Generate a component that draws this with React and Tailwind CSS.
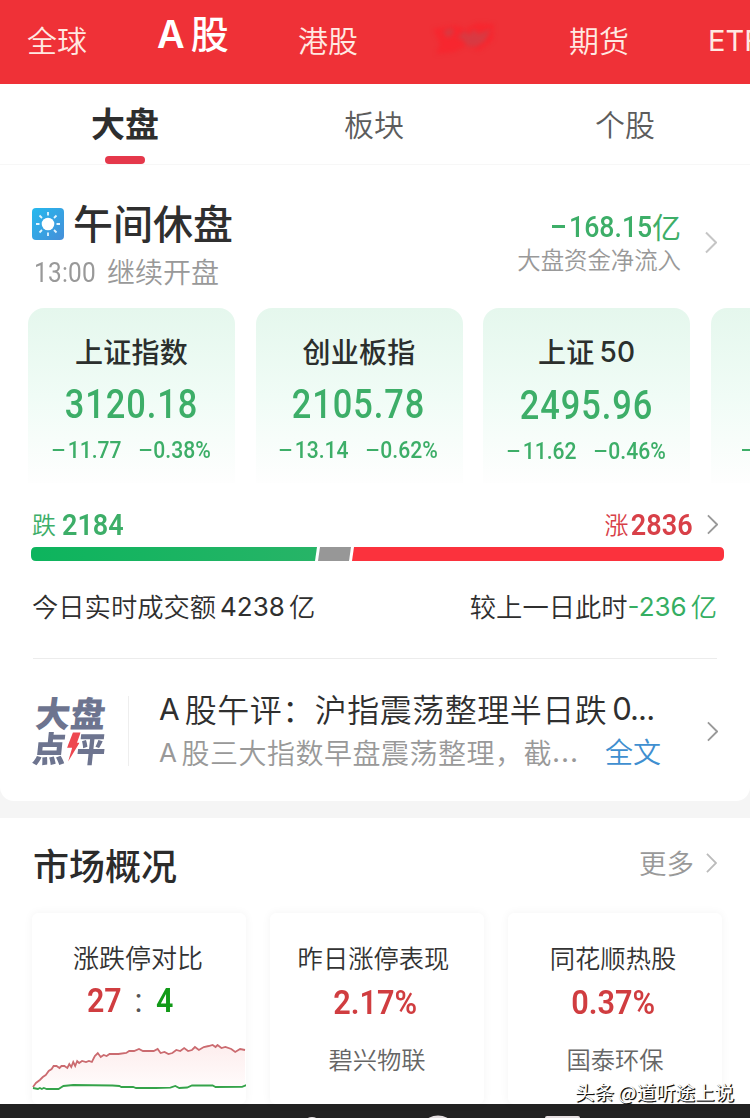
import clsx from "clsx";

const indices = [
  { name: "上证", suffix: "指数", value: "3120.18", change: "11.77", percent: "0.38%" },
  { name: "创业", suffix: "板指", value: "2105.78", change: "13.14", percent: "0.62%" },
  { name: "上证", number: "50", value: "2495.96", change: "11.62", percent: "0.46%" },
];

const riseLine =
  "1,43 4,39 8,36 11,33 14,31 17,27 20,25 22,22 25,22 28,24 30,22 33,22 36,24 38,20 40,23 42,18 44,22 46,17 48,19 51,17 55,18 58,17 61,18 64,12 67,9 70,13 73,11 76,12 79,10 88,10 96,9 99,7 104,7 109,5 113,7 124,7 128,5 131,9 135,8 139,10 143,9 147,6 151,7 155,4 159,7 163,6 166,3 170,6 175,3 180,2 184,1 187,3 189,1 193,4 197,3 203,5 207,8 212,5 217,6";

function Chevron({ className }) {
  return (
    <svg viewBox="0 0 12 22" fill="none" stroke="currentColor" strokeWidth="2" className={clsx("shrink-0", className)}>
      <path d="M1 1l10 10L1 21" />
    </svg>
  );
}

function Minus({ className }) {
  return <span className={clsx("inline-block shrink-0 bg-current", className)} />;
}

function SunIcon() {
  return (
    <svg viewBox="0 0 32 32" className="h-8 w-8 shrink-0">
      <defs>
        <linearGradient id="sky" x1="0" y1="0" x2="1" y2="1">
          <stop offset="0" stopColor="#25b9ee" />
          <stop offset="1" stopColor="#468ed8" />
        </linearGradient>
      </defs>
      <rect width="32" height="32" rx="4" fill="url(#sky)" />
      <circle cx="16" cy="16" r="6.3" fill="#fff" />
      <path
        d="M16 4v3.5M16 24.500V28M4 16h3.500M24.500 16H28M7.500 7.500l2.500 2.500M22 22l2.500 2.500M24.500 7.500L22 10M7.500 24.500L10 22"
        stroke="#e4f5ff"
        strokeWidth="1.800"
      />
    </svg>
  );
}

function TopNav() {
  return (
    <nav className="flex h-[84px] items-start overflow-hidden bg-[#ef3137] text-[30px] leading-[40px] text-[#ffe9e2]">
      <span className="ml-[27px] mt-[19px] w-[130px] shrink-0 font-[350]">全球</span>
      <span className="mt-[12px] flex w-[141px] shrink-0 gap-[6px] text-[38px] font-medium text-white">
        <span className="mt-[2px] font-['Inter'] font-semibold">A</span>
        <span>股</span>
      </span>
      <span className="mt-[19px] w-[132px] shrink-0 font-[350]">港股</span>
      <span className="mt-[21px] flex h-[36px] w-[139px] shrink-0">
        <svg viewBox="0 0 70 36" className="h-9 w-[70px] blur-[2px]">
          <path d="M3 8l22-4 10 4 12-6 17 1-1 16-14 11-13-5-12 6-18 2 4-10z" fill="#fb202a" opacity=".6" />
          <path d="M13 10l9-3 2 4-6 6zM27 17l8-8 4 5 5-6 4 5 13-5-6 12-9 6-9-1-5-7z" fill="#b94e55" opacity=".5" />
        </svg>
      </span>
      <span className="mt-[19px] w-[139px] shrink-0 font-[350]">期货</span>
      <span className="mt-[21px] shrink-0 font-['Inter'] text-[29px]">ETF</span>
    </nav>
  );
}

function Tabs() {
  return (
    <div className="grid h-[81px] grid-cols-3 border-b border-[#f7f7f7] text-center text-[30px] font-[350] leading-[40px] text-[#5c5c5c]">
      <div className="flex flex-col items-center">
        <span className="mt-[19px] text-[34px] font-bold text-[#2e2e2e]">大盘</span>
        <span className="mt-[13px] h-2 w-10 rounded-full bg-[#e5384b]" />
      </div>
      <span className="mt-[19px] pr-[2px]">板块</span>
      <span className="mt-[19px]">个股</span>
    </div>
  );
}

function Status() {
  return (
    <div className="flex h-[143px] justify-between pl-8 pr-[33px]">
      <div className="pt-[34px]">
        <div className="flex h-[50px] items-center gap-[9px]">
          <SunIcon />
          <h1 className="text-[40px] font-medium leading-[50px] text-[#2f2f2f]">
            <span className="relative -top-[2px]">午间休盘</span>
          </h1>
        </div>
        <div className="flex text-[28px] leading-[40px] text-[#999]">
          <span className="mt-px w-[75px] pl-[2px]">
            <span className="inline-block origin-left scale-x-[.87] font-['Roboto'] tracking-[0.3px]">13:00</span>
          </span>
          <span className="mt-[2px] font-[350]">继续开盘</span>
        </div>
      </div>
      <div className="flex pt-[44px]">
        <div className="mr-[24px] flex flex-col items-end">
          <div className="flex h-[34px] items-center text-[#3dae68]">
            <Minus className="mr-[4px] h-[3px] w-[13px]" />
            <span className="mt-px w-[83px] font-['Roboto'] text-[30px] font-medium leading-[34px]">
              <span className="inline-block origin-left scale-x-[.89]">168.15</span>
            </span>
            <span className="-mt-px text-[29px] leading-[34px]">亿</span>
          </div>
          <span className="text-[23.4px] font-[350] leading-[32px] text-[#999]">大盘资金净流入</span>
        </div>
        <Chevron className="mt-[22px] h-[23px] w-3 text-[#c5c5c5]" />
      </div>
    </div>
  );
}

function IndexCard({ item }) {
  return (
    <div className="flex h-[175px] w-[207px] shrink-0 flex-col items-center rounded-t-[16px] bg-linear-to-b from-[#e5f7ed] via-[#f0fcf6] via-50% to-[#fefefe] pt-[24px]">
      <div className="flex gap-[5px] text-[28px] font-medium leading-[38px] text-[#2b2f2d]">
        <span className="tracking-[0.3px]">{item.name}{item.suffix}</span>
        {item.number && <span className="mt-px font-['Inter']">{item.number}</span>}
      </div>
      <div className="mt-[11px] scale-x-[.86] font-['Roboto'] text-[40px] font-medium leading-[48px] tracking-[1.1px] text-[#3dae68]">
        {item.value}
      </div>
      <div className="mt-[9px] flex scale-x-[.88] items-center font-['Roboto'] text-[24px] leading-[24px] text-[#3dae68]">
        <Minus className="mr-[4px] h-[2px] w-[13px]" />
        <span className="font-medium">{item.change}</span>
        <Minus className="ml-[21px] mr-[2px] h-[2px] w-[13px]" />
        <span className="font-medium">{item.percent}</span>
      </div>
    </div>
  );
}

function Breadth() {
  return (
    <div className="pt-[24px]">
      <div className="flex h-[34px] items-center pl-[32px] pr-[32px]">
        <div className="flex items-center gap-[6px] text-[#3dae68]">
          <span className="text-[24px] font-[350] leading-[30px]">跌</span>
          <span className="mt-px origin-left scale-x-[.9] font-['Roboto'] text-[30px] font-semibold leading-[34px]">2184</span>
        </div>
        <div className="ml-auto flex items-center text-[#d84048]">
          <span className="relative left-[6px] text-[24px] font-[350] leading-[30px]">涨</span>
          <span className="ml-[2px] mt-px origin-right scale-x-[.9] font-['Roboto'] text-[30px] font-semibold leading-[34px]">2836</span>
        </div>
        <Chevron className="ml-[14px] h-[21px] w-[11px] text-[#999]" />
      </div>
      <svg viewBox="0 0 693 14" className="ml-[31px] mt-[6px] h-[14px] w-[693px]">
        <defs>
          <linearGradient id="fall">
            <stop offset="0" stopColor="#0db45d" />
            <stop offset="1" stopColor="#27b467" />
          </linearGradient>
        </defs>
        <path d="M5 0H286L284 14H5Q0 14 0 9V5Q0 0 5 0Z" fill="url(#fall)" />
        <path d="M289 0H320L318 14H287Z" fill="#979797" />
        <path d="M323 0H688Q693 0 693 5V9Q693 14 688 14H321Z" fill="#fb323d" />
      </svg>
      <div className="mt-[25px] flex h-[40px] items-center justify-between pl-[32px] pr-[33px] text-[26.3px] font-[350] leading-[40px] text-[#2f2f2f]">
        <div className="flex">
          今日实时成交额<span className="ml-[4px] mr-[4px] mt-px font-['Inter'] text-[26px] font-normal">4238</span>亿
        </div>
        <div className="flex">
          较上一日此时
          <span className="flex text-[#35ae62]">
            <span className="mr-[4px] mt-px font-['Inter'] text-[26px] font-normal">-236</span>亿
          </span>
        </div>
      </div>
      <div className="mx-[33px] mt-[32px] h-px bg-[#ececec]" />
    </div>
  );
}

function CommentLogo() {
  return (
    <div className="w-[78px] shrink-0 -skew-x-[6deg] text-[35px] font-black leading-[35px] text-[#6d748f]">
      <div className="ml-[2px]">大盘</div>
      <div className="ml-[3px] flex">
        <span className="w-[34px] origin-left scale-x-[.96]">点</span>
        <svg viewBox="0 0 14 34" className="mt-[1px] h-[34px] w-[12px] shrink-0">
          <path d="M5 0h9l-3 12h3L3 34l3-16H0z" fill="#ee4850" />
        </svg>
        <span className="-ml-[2px] w-[27px] origin-left scale-x-[.82]">平</span>
      </div>
    </div>
  );
}

function Commentary() {
  return (
    <div className="flex h-[142px] pl-8 pr-[32px]">
      <div className="pt-[35px]">
        <CommentLogo />
      </div>
      <div className="ml-[18px] mt-[37px] h-[70px] w-px bg-[#eee]" />
      <div className="ml-[30px] w-[510px] shrink-0 whitespace-nowrap pt-[27px]">
        <div className="flex text-[32px] leading-[44px] tracking-[0.5px] text-[#2f2f2f]">
          <span className="mr-[5px] mt-px font-['Inter'] text-[30px] font-normal tracking-normal">A</span>
          <span className="font-[350]">股午评：沪指震荡整理半日跌</span>
          <span className="ml-[5px] mt-px font-['Inter'] text-[31px] font-normal tracking-[-0.9px]">0...</span>
        </div>
        <div className="flex text-[28px] font-[350] leading-[42px] tracking-[0.5px] text-[#999]">
          <span className="mr-[4px] mt-px font-['Inter'] text-[26px] font-normal">A</span>
          <span>股三大指数早盘震荡整理，截</span>
          <span className="font-['Inter'] font-normal tracking-[1px]">...</span>
          <span className="-mt-px ml-auto mr-[8px] tracking-normal text-[#3f8fd0]">全文</span>
        </div>
      </div>
      <Chevron className="ml-auto mt-[62px] h-[21px] w-[11px] text-[#999]" />
    </div>
  );
}

function OverviewCard({ title, className, children }) {
  return (
    <div className="flex h-[191px] flex-col items-center rounded-[6px] bg-white pt-[26px] shadow-[0_0_10px_rgba(0,0,0,0.05)]">
      <span className={clsx("font-[350] leading-[36px] text-[#333]", className)}>{title}</span>
      {children}
    </div>
  );
}

function HotStock({ percent, name }) {
  return (
    <>
      <span className="mt-[8px] scale-x-[.93] pr-[3px] font-['Roboto'] text-[33px] font-semibold leading-[40px] text-[#d03d40]">
        {percent}
      </span>
      <span className="mt-[18px] text-[24.3px] font-[350] leading-[36px] text-[#666]">{name}</span>
    </>
  );
}

function Overview() {
  return (
    <section className="bg-white">
      <div className="flex h-[95px] items-center pl-[33px] pr-[33px]">
        <h2 className="text-[36px] font-medium leading-[48px] text-[#2b2b2b]">
          <span className="relative -top-[2px]">市场概况</span>
        </h2>
        <span className="ml-auto text-[27.5px] font-[350] leading-[40px] text-[#999]">
          <span className="relative -top-[4px]">更多</span>
        </span>
        <Chevron className="mb-[6px] ml-[12px] h-[20px] w-[11px] text-[#bbb]" />
      </div>
      <div className="grid grid-cols-[214px_214px_214px] gap-6 pl-8">
        <OverviewCard title="涨跌停对比" className="pr-[2px] text-[26px]">
          <div className="mt-[5px] flex pr-[16px] font-['Roboto'] text-[33px] font-semibold leading-[42px]">
            <span className="w-[34px] text-[#d03d40]">
              <span className="inline-block origin-left scale-x-[.92]">27</span>
            </span>
            <span className="w-[35px] text-center font-normal text-[#555]">:</span>
            <span className="origin-left scale-x-[.92] text-[#129a18]">4</span>
          </div>
          <svg viewBox="0 0 218 50" preserveAspectRatio="none" className="mt-[22px] h-[50px] w-[214px]" fill="none">
            <defs>
              <linearGradient id="rise" x1="0" y1="0" x2="0" y2="1">
                <stop offset="0" stopColor="#fce6e6" />
                <stop offset="1" stopColor="#fffafa" />
              </linearGradient>
            </defs>
            <polygon points={`${riseLine} 217,42 1,44`} fill="url(#rise)" opacity=".7" />
            <polyline points={riseLine} stroke="#cb6b70" strokeWidth="1.8" />
            <path
              d="M1 44l5 1 2-1 2 1 2-1 3 1h12l5-3 10-1 40 .5 7 .5 2 1h12l3 1h20l15-.3 5-1.700 4 2 8-.5 5-2h21l3 1.500 27-.2 5-2 6-1h14"
              stroke="#35a34a"
              strokeWidth="1.800"
            />
          </svg>
        </OverviewCard>
        <OverviewCard title="昨日涨停表现" className="pr-[7px] text-[25.3px]">
          <HotStock percent="2.17%" name="碧兴物联" />
        </OverviewCard>
        <OverviewCard title="同花顺热股" className="pr-[4px] text-[25.3px]">
          <HotStock percent="0.37%" name="国泰环保" />
        </OverviewCard>
      </div>
    </section>
  );
}

export default function App() {
  return (
    <div className="relative h-[1118px] w-[750px] overflow-hidden bg-[#f5f5f5] font-['Noto_Sans_CJK_SC',sans-serif]">
      <main className="h-[801px] rounded-b-[14px] bg-white">
        <TopNav />
        <Tabs />
        <Status />
        <div className="flex gap-[20.5px] overflow-hidden pl-[28px]">
          {indices.map((item) => (
            <IndexCard key={item.value} item={item} />
          ))}
          <div className="flex h-[175px] w-[207px] shrink-0 items-start rounded-tl-[16px] bg-linear-to-b from-[#e5f7ed] via-[#f0fcf6] via-50% to-[#fefefe] pl-[31px] pt-[141px] text-[#3dae68]">
            <Minus className="h-[2px] w-[11px]" />
          </div>
        </div>
        <Breadth />
        <Commentary />
      </main>
      <div className="h-[17px]" />
      <Overview />
      <footer className="h-[14px] bg-[#222]">
        <svg viewBox="0 0 750 14" className="h-[14px] w-[750px]" fill="#e4dee0">
          <ellipse cx="312" cy="16" rx="6" ry="3" />
          <ellipse cx="438" cy="18" rx="12" ry="6.5" />
          <rect x="545" y="12" width="35" height="8" rx="2" />
        </svg>
      </footer>
      <div className="absolute bottom-[11px] right-[16px] flex gap-[4px] whitespace-nowrap text-[19.5px] leading-[30px] text-white [text-shadow:1px_1px_0_#111,1px_1px_1px_#111]">
        <span>头条</span>
        <span>@道听途上说</span>
      </div>
    </div>
  );
}
